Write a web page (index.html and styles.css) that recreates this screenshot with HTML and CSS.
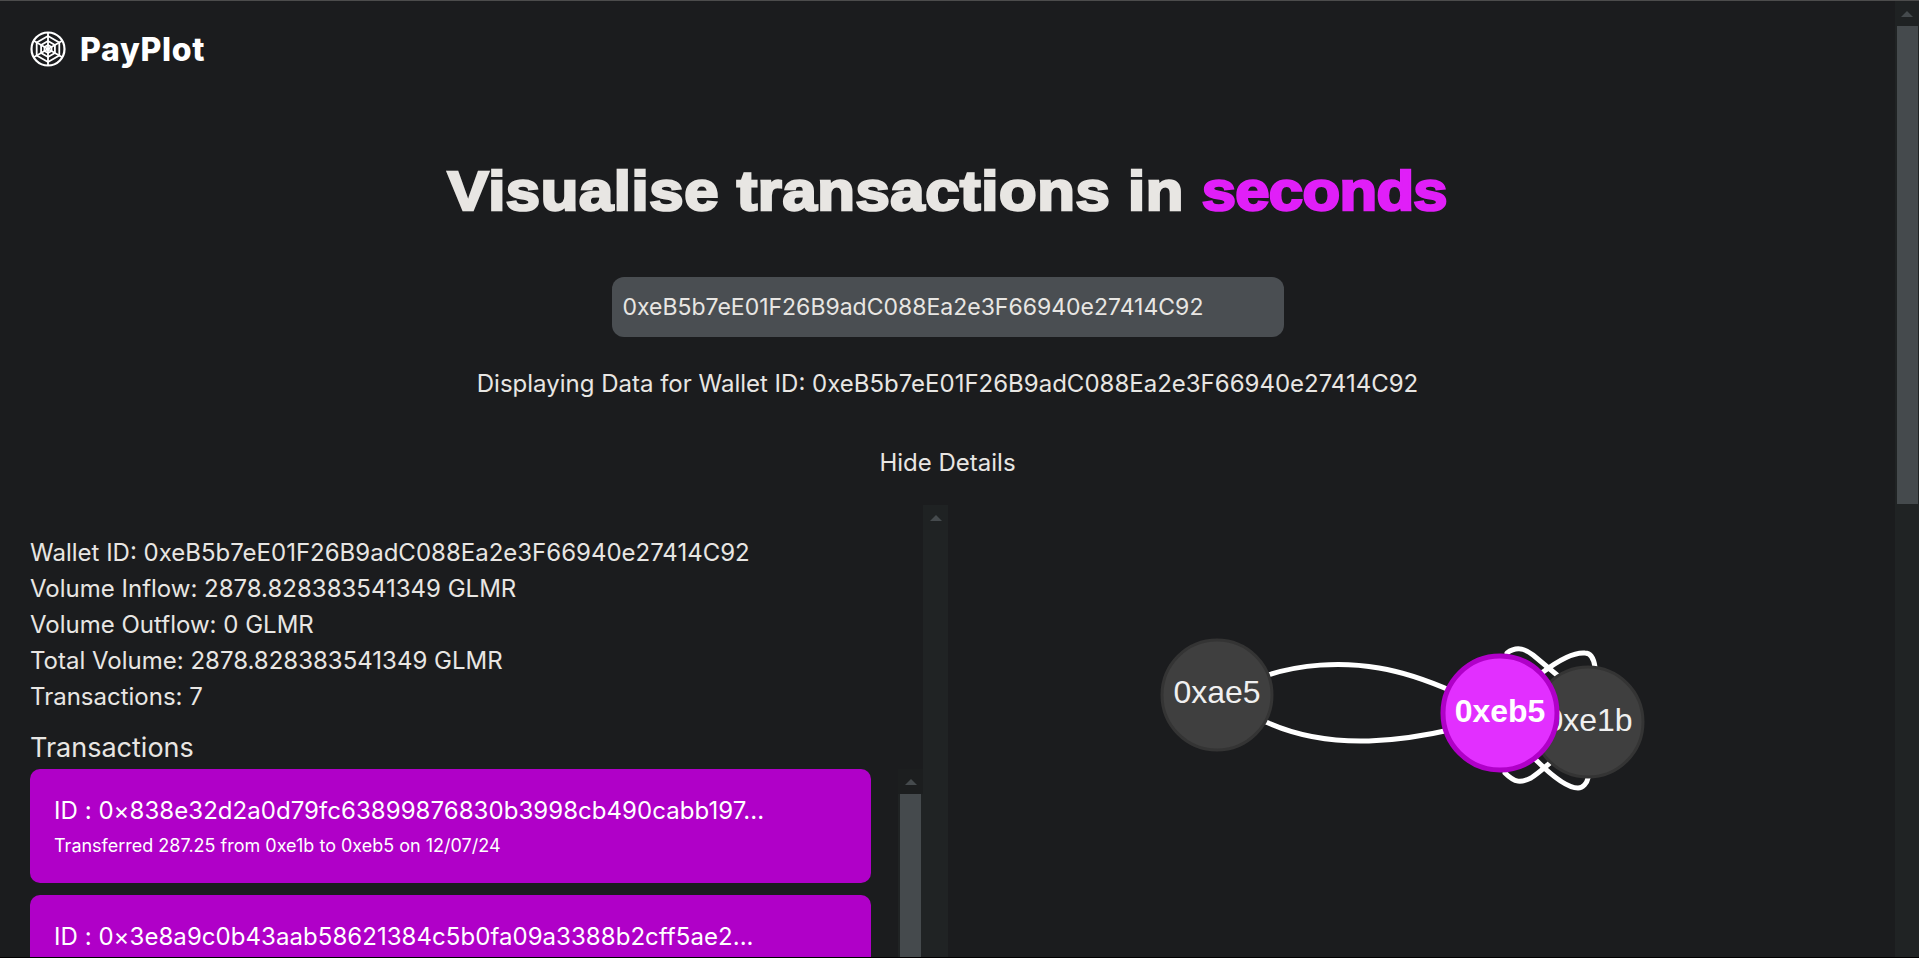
FILE: index.html
```html
<!DOCTYPE html>
<html lang="en">
<head>
<meta charset="utf-8">
<title>PayPlot</title>
<link rel="stylesheet" href="styles.css">
</head>
<body>
<div class="window">
  <main class="page">
    <header class="brand">
      <svg class="brand-icon" viewBox="0 0 36 36" fill="none" stroke="#fff" stroke-width="1.8">
        <circle cx="18" cy="18" r="16.5" stroke-width="2.2"/>
        <polygon points="18,5 29.3,11.5 29.3,24.5 18,31 6.7,24.5 6.7,11.5"/>
        <polygon points="18,10 24.9,14 24.9,22 18,26 11.1,22 11.1,14"/>
        <polygon points="18,14 21.5,16 21.5,20 18,22 14.5,20 14.5,16"/>
        <path d="M18 1.5V34.5M3.7 9.7L32.3 26.3M3.7 26.3L32.3 9.7"/>
      </svg>
      <span class="brand-name">PayPlot</span>
    </header>
    <div class="headline-row">
      <h1 class="headline">Visualise transactions in <span class="accent">seconds</span></h1>
    </div>
    <div class="search-row">
      <div class="search">0xeB5b7eE01F26B9adC088Ea2e3F66940e27414C92</div>
    </div>
    <p class="status">Displaying Data for Wallet ID: 0xeB5b7eE01F26B9adC088Ea2e3F66940e27414C92</p>
    <p class="toggle">Hide Details</p>
    <section class="details">
      <div class="panel">
        <div class="panel-body">
          <ul class="stats">
            <li>Wallet ID: 0xeB5b7eE01F26B9adC088Ea2e3F66940e27414C92</li>
            <li>Volume Inflow: 2878.828383541349 GLMR</li>
            <li>Volume Outflow: 0 GLMR</li>
            <li>Total Volume: 2878.828383541349 GLMR</li>
            <li>Transactions: 7</li>
          </ul>
          <h2 class="list-title">Transactions</h2>
          <div class="list-wrap">
            <div class="cards">
              <article class="card">
                <div class="card-id">ID : 0×838e32d2a0d79fc63899876830b3998cb490cabb197...</div>
                <div class="card-sub">Transferred 287.25 from 0xe1b to 0xeb5 on 12/07/24</div>
              </article>
              <article class="card">
                <div class="card-id">ID : 0×3e8a9c0b43aab58621384c5b0fa09a3388b2cff5ae2...</div>
              </article>
            </div>
            <div class="rail rail-inner"><div class="rail-btn rail-btn-dark"><i class="arrow"></i></div><div class="rail-thumb"></div></div>
          </div>
        </div>
        <div class="rail rail-panel"><div class="rail-btn"><i class="arrow"></i></div></div>
      </div>
      <div class="graph">
        <svg class="graph-svg" viewBox="0 0 946 453" fill="none">
          <g stroke="#fff" stroke-width="5" stroke-linecap="round">
            <path d="M319 170C350 160 390 156 430 163C455 167 480 176 505 187"/>
            <path d="M317 217C350 232 385 237 420 236C450 235 475 231 505 224"/>
            <path d="M558 148C566 142 574 142 584 150L608 170"/>
            <path d="M594 167C610 155 625 147 636 148C642 148 645 155 646 162"/>
            <path d="M556 268C566 278 572 278 582 273C590 268 596 262 601 258"/>
            <path d="M587 255C600 268 618 283 629 283C634 283 638 278 639 273"/>
          </g>
          <circle cx="639" cy="217" r="55" fill="#3f3f3f" stroke="#343434" stroke-width="3"/>
          <text x="640" y="226" class="node-label">0xe1b</text>
          <circle cx="268" cy="190" r="55" fill="#3f3f3f" stroke="#343434" stroke-width="3"/>
          <text x="268" y="198" class="node-label">0xae5</text>
          <circle cx="551" cy="208" r="57" fill="#e22fff" stroke="#b000c8" stroke-width="5"/>
          <text x="551" y="217" class="node-label node-strong">0xeb5</text>
        </svg>
      </div>
    </section>
  </main>
  <div class="rail rail-page"><div class="rail-btn"><i class="arrow"></i></div><div class="rail-thumb rail-thumb-page"></div></div>
</div>
</body>
</html>
```
FILE: styles.css
```css
* { box-sizing: border-box; }
html, body { margin: 0; height: 100%; overflow: hidden; }
body {
  background: #1b1c1e;
  color: #e8e6e3;
  font-family: Inter, "Liberation Sans", sans-serif;
}
.window {
  display: flex;
  height: 958px;
  overflow: hidden;
  border-top: 1px solid #4c4c4c;
  border-bottom: 1px solid #000;
}
.page { flex: 1; min-width: 0; display: flex; flex-direction: column; }
.brand { display: flex; align-items: center; gap: 14px; height: 36px; margin: 30px 0 0 30px; }
.brand-icon { width: 36px; height: 36px; flex: none; }
.brand-name { font-size: 32px; font-weight: 800; color: #fff; letter-spacing: 0.7px; }
.headline-row { display: flex; justify-content: center; margin-top: 88px; }
.headline {
  margin: 0;
  white-space: nowrap;
  font-family: "Liberation Sans", Arial, sans-serif;
  font-size: 56px;
  line-height: 72px;
  font-weight: 700;
  letter-spacing: 0.55px;
  -webkit-text-stroke: 2.5px currentColor;
  transform: scaleX(1.1);
}
.accent { color: #e01ff8; letter-spacing: -0.6px; }
.search-row { display: flex; justify-content: center; margin-top: 50px; }
.search {
  width: 672px;
  height: 60px;
  padding: 0 11px;
  background: #4a4e52;
  border-radius: 12px;
  font-size: 23px;
  line-height: 60px;
}
.status, .toggle { margin: 0; text-align: center; font-size: 24px; line-height: 32px; }
.status { margin-top: 31px; }
.toggle { margin-top: 47px; }
.details { display: flex; margin-top: 26px; flex: 1; min-height: 0; }
.panel { width: 948px; display: flex; flex: none; min-height: 0; }
.panel-body { flex: 1; min-width: 0; padding: 30px 0 0 30px; display: flex; flex-direction: column; }
.stats { list-style: none; margin: 0; padding: 0; font-size: 24px; line-height: 36px; }
.list-title { margin: 16px 0 0; font-size: 27px; font-weight: 400; line-height: 34px; }
.list-wrap { display: flex; flex: 1; min-height: 0; margin-top: 4px; overflow: hidden; }
.cards { width: 841px; flex: none; display: flex; flex-direction: column; gap: 12px; }
.card { background: #b000c8; color: #fff; border-radius: 10px; height: 114px; flex: none; padding: 26px 24px 0; }
.card-id { font-size: 24px; line-height: 32px; letter-spacing: 0.05px; }
.card-sub { margin-top: 8px; font-size: 18px; line-height: 22px; }
.rail { width: 24px; flex: none; background: #202324; display: flex; flex-direction: column; align-items: center; }
.rail-page { width: 24px; }
.rail-panel { width: 25px; }
.rail-inner { width: 25px; margin-left: 27px; }
.rail-btn { width: 100%; height: 25px; background: #1f2223; display: flex; align-items: center; justify-content: center; flex: none; }
.rail-btn-dark { background: #1c1e1f; }
.arrow { width: 0; height: 0; border-left: 6px solid transparent; border-right: 6px solid transparent; border-bottom: 6px solid #454a4d; }
.rail-thumb { width: 21px; flex: 1; background: #454a4d; }
.rail-thumb-page { flex: none; height: 478px; }
.graph { flex: 1; min-width: 0; padding-left: 1px; }
.graph-svg { display: block; width: 946px; height: 453px; }
.node-label { fill: #f0f0f0; font-family: "Liberation Sans", Arial, sans-serif; font-size: 32px; text-anchor: middle; }
.node-strong { fill: #fff; font-weight: 700; -webkit-text-stroke: 0.6px #fff; }
```
